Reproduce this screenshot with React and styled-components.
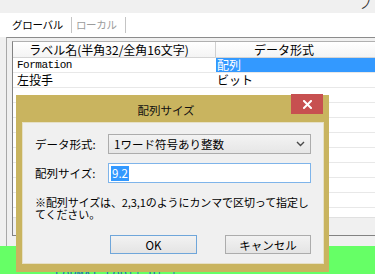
import React from "react";
import styled, { createGlobalStyle } from "styled-components";

const JP = `"Noto Sans CJK JP", "Noto Sans", sans-serif`;
const MONO = `"Liberation Mono", "DejaVu Sans Mono", monospace`;

const GlobalStyle = createGlobalStyle`
  html, body { margin: 0; padding: 0; background: #f0f0f0; }
  body { font-family: ${JP}; }
`;

const Page = styled.div`
  position: relative;
  width: 375px;
  height: 274px;
  overflow: hidden;
  display: flex;
  flex-direction: column;
  background: #f0f0f0;
  font-family: ${JP};
  color: #000;
`;

const TopBar = styled.div`
  height: 13px;
  flex: none;
  display: flex;
  justify-content: flex-end;
  overflow: hidden;
`;

const TopGlyph = styled.span`
  font-size: 12px;
  line-height: 12px;
  margin-top: -2px;
  margin-right: 3px;
  color: #333;
`;

const TabStrip = styled.div`
  height: 24px;
  flex: none;
  background: #fff;
  display: flex;
  align-items: center;
  padding-left: 8px;
`;

const Tab = styled.span`
  font-size: 10.5px;
  letter-spacing: -0.3px;
  line-height: 16px;
  padding: 0 8px 0 4px;
  border-right: 1px solid #c4c4c4;
  color: ${(p) => (p.$active ? "#000" : "#9c9c9c")};
`;

const GroupFrame = styled.div`
  flex: none;
  height: 209px;
  box-sizing: border-box;
  margin-left: 6px;
  border-top: 1px solid #8c8c8c;
  border-left: 1px solid #a8a8a8;
  padding: 3px 0 10px 5px;
  display: flex;
`;

const Grid = styled.div`
  flex: 1;
  display: flex;
  flex-direction: column;
  background: #fff;
  border-left: 1px solid #828282;
  border-top: 1px solid #b0b0b0;
  border-bottom: 1px solid #828282;
`;

const HeaderRow = styled.div`
  flex: none;
  display: grid;
  grid-template-columns: 203px 1fr;
  height: 16px;
  box-sizing: border-box;
  border-bottom: 1px solid #d4d4d4;
  background: linear-gradient(#ffffff, #f4f4f4);
`;

const HeaderCell = styled.div`
  font-size: 12px;
  line-height: 15px;
  text-align: center;
  white-space: nowrap;
  padding-right: ${(p) => p.$pr || 0}px;
  border-right: ${(p) => (p.$divider ? "1px solid #d0d0d0" : "none")};
`;

const Body = styled.div`
  flex: 1;
  overflow: hidden;
`;

const Row = styled.div`
  display: grid;
  grid-template-columns: 203px 1fr;
  height: 15px;
  box-sizing: border-box;
  border-bottom: 1px solid #e8e8e8;
`;

const Cell = styled.div`
  font-family: ${(p) => (p.$mono ? MONO : JP)};
  font-size: ${(p) => (p.$mono ? "11px" : "12px")};
  letter-spacing: ${(p) => (p.$mono ? "-0.5px" : "0")};
  line-height: 14px;
  white-space: nowrap;
  padding-left: ${(p) => (p.$first ? 4 : 1)}px;
  background: ${(p) => (p.$selected ? "#3399ff" : "transparent")};
  color: ${(p) => (p.$selected ? "#fff" : "#000")};
`;

const HScroll = styled.div`
  flex: none;
  height: 17px;
  background: #f0f0f0;
  border-top: 1px solid #e0e0e0;
`;

const GreenArea = styled.div`
  flex: 1;
  background: #66ff66;
  overflow: hidden;
`;

const GreenText = styled.div`
  font-family: ${MONO};
  font-size: 12px;
  line-height: 12px;
  color: #1f6fb5;
  padding: 24px 0 0 55px;
  white-space: nowrap;
`;

const Dialog = styled.div`
  position: absolute;
  left: 16px;
  top: 95px;
  width: 313px;
  height: 177px;
  box-sizing: border-box;
  background: #c9b45f;
  padding: 0 5px 8px 6px;
  display: flex;
  flex-direction: column;
`;

const TitleBar = styled.div`
  position: relative;
  flex: none;
  height: 27px;
  display: flex;
  align-items: center;
  justify-content: center;
  padding-right: 14px;
`;

const TitleText = styled.span`
  font-size: 11.5px;
  line-height: 14px;
  color: #111;
  margin-top: 3px;
`;

const CloseButton = styled.div`
  position: absolute;
  top: -1px;
  right: 1px;
  width: 32px;
  height: 20px;
  background: #c75050;
  display: flex;
  align-items: center;
  justify-content: center;
`;

const Panel = styled.div`
  flex: 1;
  box-sizing: border-box;
  background: #f0f0f0;
  border: 1px solid #e6e0c6;
  padding: 11px 12px 0 12px;
  display: flex;
  flex-direction: column;
`;

const FieldRow = styled.div`
  display: flex;
  align-items: center;
  height: 20px;
  margin-top: ${(p) => p.$mt || 0}px;
`;

const Label = styled.span`
  flex: none;
  width: 73px;
  font-size: 11.5px;
  line-height: 14px;
  white-space: nowrap;
`;

const SelectBox = styled.div`
  flex: 1;
  height: 20px;
  box-sizing: border-box;
  border: 1px solid #acacac;
  background: linear-gradient(#f3f3f3, #e6e6e6);
  display: flex;
  align-items: center;
  justify-content: space-between;
  padding: 0 5px 0 5px;
  font-size: 11.5px;
  line-height: 14px;
`;

const InputBox = styled.div`
  flex: 1;
  height: 20px;
  box-sizing: border-box;
  border: 1px solid #7eb4ea;
  background: #fff;
  display: flex;
  align-items: center;
  padding-left: 2px;
`;

const Selected = styled.span`
  background: #3399ff;
  color: #fff;
  font-size: 11.5px;
  line-height: 15px;
  padding: 0 1px;
`;

const Note = styled.div`
  margin-top: 13px;
  font-size: 11px;
  line-height: 12px;
  letter-spacing: -0.1px;
  white-space: nowrap;
`;

const ButtonRow = styled.div`
  margin-top: 15px;
  display: flex;
  justify-content: flex-end;
  gap: 28px;
`;

const Button = styled.div`
  width: ${(p) => p.$w}px;
  height: 19px;
  box-sizing: border-box;
  border: 1px solid ${(p) => (p.$default ? "#6fa6da" : "#acacac")};
  background: linear-gradient(#f2f2f2, #e4e4e4);
  display: flex;
  align-items: center;
  justify-content: center;
  font-size: 11.5px;
  line-height: 14px;
`;

const rows = [
  { a: "Formation", mono: true, b: "配列", sel: true },
  { a: "左投手", b: "ビット" },
  {}, {}, {}, {}, {}, {}, {}, {}, {},
];

export default function App() {
  return (
    <>
      <GlobalStyle />
      <Page>
        <TopBar>
          <TopGlyph>ノ</TopGlyph>
        </TopBar>
        <TabStrip>
          <Tab $active>グローバル</Tab>
          <Tab>ローカル</Tab>
        </TabStrip>
        <GroupFrame>
          <Grid>
            <HeaderRow>
              <HeaderCell $divider $pr={10}>ラベル名(半角32/全角16文字)</HeaderCell>
              <HeaderCell $pr={23}>データ形式</HeaderCell>
            </HeaderRow>
            <Body>
              {rows.map((r, i) => (
                <Row key={i}>
                  <Cell $first $mono={r.mono}>{r.a || ""}</Cell>
                  <Cell $selected={r.sel}>{r.b || ""}</Cell>
                </Row>
              ))}
            </Body>
            <HScroll />
          </Grid>
        </GroupFrame>
        <GreenArea>
          <GreenText>FORMAT LOD|+ H+ +</GreenText>
        </GreenArea>

        <Dialog>
          <TitleBar>
            <TitleText>配列サイズ</TitleText>
            <CloseButton>
              <svg width="9" height="9" viewBox="0 0 9 9">
                <path d="M1 1 L8 8 M8 1 L1 8" stroke="#fff" strokeWidth="2" strokeLinecap="square" />
              </svg>
            </CloseButton>
          </TitleBar>
          <Panel>
            <FieldRow>
              <Label>データ形式:</Label>
              <SelectBox>
                <span>1ワード符号あり整数</span>
                <svg width="9" height="6" viewBox="0 0 9 6">
                  <polyline points="1,1 4.5,4.5 8,1" fill="none" stroke="#4a4a4a" strokeWidth="1.4" />
                </svg>
              </SelectBox>
            </FieldRow>
            <FieldRow $mt={9}>
              <Label>配列サイズ:</Label>
              <InputBox>
                <Selected>9.2</Selected>
              </InputBox>
            </FieldRow>
            <Note>
              ※配列サイズは、2,3,1のようにカンマで区切って指定し
              <br />
              てください。
            </Note>
            <ButtonRow>
              <Button $w={87} $default>OK</Button>
              <Button $w={86}>キャンセル</Button>
            </ButtonRow>
          </Panel>
        </Dialog>
      </Page>
    </>
  );
}
